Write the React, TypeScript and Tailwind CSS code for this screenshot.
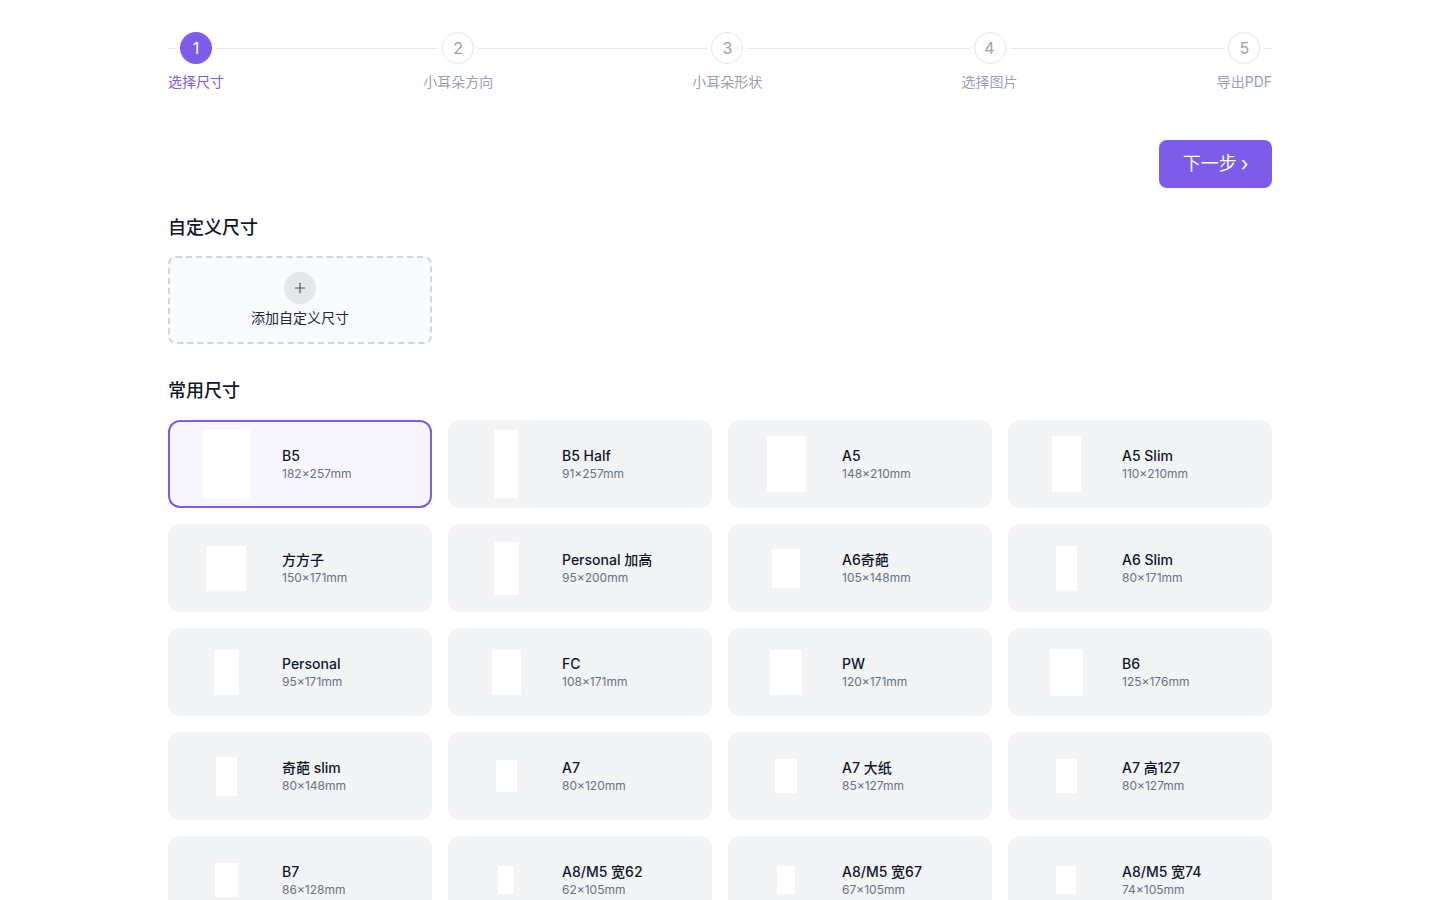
import React, { useState } from 'react';
import { Plus } from 'lucide-react';

type PaperSize = {
  name: string;
  w: number;
  h: number;
};

const steps = ['选择尺寸', '小耳朵方向', '小耳朵形状', '选择图片', '导出PDF'];

const sizes: PaperSize[] = [
  { name: 'B5', w: 182, h: 257 },
  { name: 'B5 Half', w: 91, h: 257 },
  { name: 'A5', w: 148, h: 210 },
  { name: 'A5 Slim', w: 110, h: 210 },
  { name: '方方子', w: 150, h: 171 },
  { name: 'Personal 加高', w: 95, h: 200 },
  { name: 'A6奇葩', w: 105, h: 148 },
  { name: 'A6 Slim', w: 80, h: 171 },
  { name: 'Personal', w: 95, h: 171 },
  { name: 'FC', w: 108, h: 171 },
  { name: 'PW', w: 120, h: 171 },
  { name: 'B6', w: 125, h: 176 },
  { name: '奇葩 slim', w: 80, h: 148 },
  { name: 'A7', w: 80, h: 120 },
  { name: 'A7 大纸', w: 85, h: 127 },
  { name: 'A7 高127', w: 80, h: 127 },
  { name: 'B7', w: 86, h: 128 },
  { name: 'A8/M5 宽62', w: 62, h: 105 },
  { name: 'A8/M5 宽67', w: 67, h: 105 },
  { name: 'A8/M5 宽74', w: 74, h: 105 },
];

// 缩略图按最大尺寸 257mm -> 68px 缩放
const SCALE = 68 / 257;

const Stepper = ({ current }: { current: number }) => (
  <div className="relative flex justify-between">
    <div className="absolute left-0 right-0 top-4 h-px bg-gray-200" />
    {steps.map((label, i) => {
      const active = i === current;
      return (
        <div key={label} className="relative flex flex-col items-center gap-2">
          <div
            className={
              active
                ? 'flex h-8 w-8 items-center justify-center rounded-full bg-[#7c5ce8] text-base text-white ring-4 ring-white'
                : 'flex h-8 w-8 items-center justify-center rounded-full border border-gray-200 bg-white text-base text-gray-400 ring-4 ring-white'
            }
          >
            {i + 1}
          </div>
          <span className={active ? 'text-sm leading-5 text-[#7c5ce8]' : 'text-sm leading-5 text-gray-400'}>
            {label}
          </span>
        </div>
      );
    })}
  </div>
);

const SizeCard = ({ size, selected, onClick }: { size: PaperSize; selected: boolean; onClick: () => void }) => (
  <button
    onClick={onClick}
    className={
      selected
        ? 'flex h-[88px] items-center rounded-xl border-2 border-[#7c5ce8] bg-[#f7f6fe] pl-[14px] text-left'
        : 'flex h-[88px] items-center rounded-xl border-2 border-transparent bg-[#f1f3f5] pl-[14px] text-left'
    }
  >
    <div className="flex h-[68px] w-[84px] shrink-0 items-center justify-center">
      <div
        className="bg-white"
        style={{ width: Math.round(size.w * SCALE), height: Math.round(size.h * SCALE) }}
      />
    </div>
    <div className="ml-[14px] flex flex-col">
      <span className="text-sm font-medium leading-5 text-gray-900">{size.name}</span>
      <span className="text-xs leading-4 text-gray-500">
        {size.w}×{size.h}mm
      </span>
    </div>
  </button>
);

export default function App() {
  const [selected, setSelected] = useState('B5');

  return (
    <div
      className="min-h-screen bg-white"
      style={{ fontFamily: 'Inter, "Noto Sans CJK SC", sans-serif' }}
    >
      <div className="mx-auto w-[1104px] pt-8 pb-16">
        <Stepper current={0} />

        <div className="mt-12 flex justify-end">
          <button className="flex h-12 w-[113px] items-center justify-center gap-1 rounded-lg bg-[#7c5ce8] text-lg text-white">
            下一步 <span className="text-xl leading-none">›</span>
          </button>
        </div>

        <h2 className="mt-[26px] text-lg font-medium leading-7 text-gray-900">自定义尺寸</h2>
        <button className="mt-[14px] flex h-[88px] w-[264px] flex-col items-center justify-center gap-1 rounded-lg border-2 border-dashed border-gray-300 bg-gray-50">
          <span className="flex h-8 w-8 items-center justify-center rounded-full bg-gray-200 text-gray-600">
            <Plus size={16} strokeWidth={1.75} />
          </span>
          <span className="text-sm leading-5 text-gray-800">添加自定义尺寸</span>
        </button>

        <h2 className="mt-[33px] text-lg font-medium leading-7 text-gray-900">常用尺寸</h2>
        <div className="mt-[15px] grid grid-cols-4 gap-4">
          {sizes.map((s) => (
            <SizeCard
              key={s.name}
              size={s}
              selected={selected === s.name}
              onClick={() => setSelected(s.name)}
            />
          ))}
        </div>
      </div>
    </div>
  );
}
